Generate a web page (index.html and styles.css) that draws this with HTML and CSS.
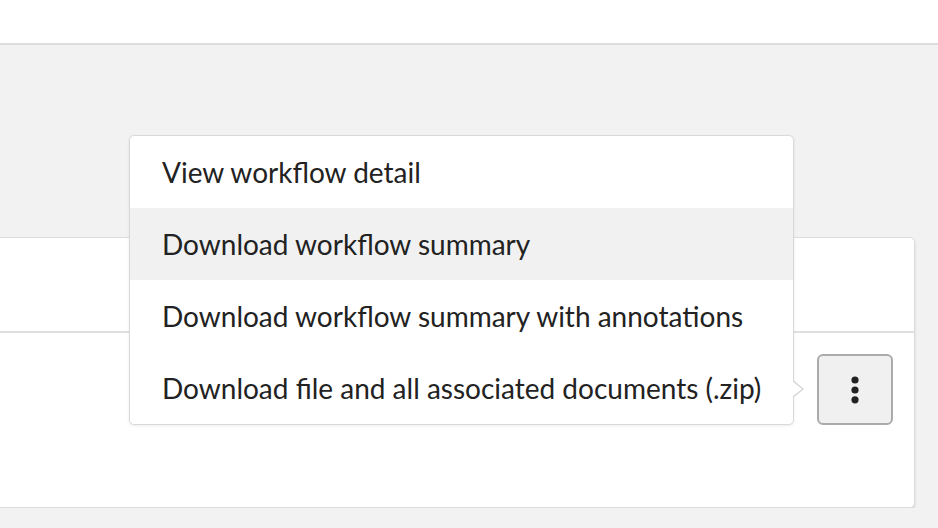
FILE: index.html
```html
<!DOCTYPE html>
<html lang="en">
<head>
    <meta charset="UTF-8">
    <meta name="viewport" content="width=device-width, initial-scale=1.0">
    <title>Workflow</title>
    <link rel="stylesheet" href="styles.css">
</head>
<body>
    <div class="topbar"></div>
    <div class="main">
        <div class="card">
            <div class="card-head"></div>
            <div class="card-body">
                <div class="actions">
                    <ul class="menu">
                        <li>View workflow detail</li>
                        <li class="active">Download workflow summary</li>
                        <li>Download workflow summary with annotations</li>
                        <li>Download file and all associated documents (.zip)</li>
                    </ul>
                    <button class="kebab" aria-label="More actions">
                        <svg width="10" height="30" viewBox="0 0 10 30">
                            <circle cx="5" cy="5" r="3.6" fill="#222"/>
                            <circle cx="5" cy="15" r="3.6" fill="#222"/>
                            <circle cx="5" cy="24.8" r="3.6" fill="#222"/>
                        </svg>
                    </button>
                </div>
            </div>
        </div>
    </div>
</body>
</html>
```

FILE: styles.css
```css
body {
    margin: 0;
    background-color: #f2f2f2;
    font-family: Lato, "Open Sans", sans-serif;
    color: #222;
    overflow: hidden;
}

.topbar {
    height: 43px;
    background-color: #fff;
    border-bottom: 2px solid #dcdcdc;
}

.main {
    padding-top: 192px;
}

.card {
    margin-left: -10px;
    margin-right: 23px;
    background-color: #fff;
    border: 1px solid #dcdcdc;
    border-radius: 5px;
    box-shadow: 0 2px 3px rgba(0, 0, 0, 0.12);
}

.card-head {
    height: 93px;
    border-bottom: 2px solid #e0e0e0;
}

.card-body {
    display: flex;
    justify-content: flex-end;
    padding: 21px 21px 82px;
}

.actions {
    position: relative;
}

.kebab {
    display: flex;
    align-items: center;
    justify-content: center;
    width: 76px;
    height: 71px;
    background-color: #f0f0f0;
    border: 2px solid #ababab;
    border-radius: 6px;
    padding: 0;
    cursor: pointer;
}

.menu {
    position: absolute;
    right: calc(100% + 23px);
    bottom: 0;
    width: 663px;
    margin: 0;
    padding: 0;
    list-style: none;
    background-color: #fff;
    border: 1px solid #d9d9d9;
    border-radius: 5px;
    box-shadow: 0 1px 3px rgba(0, 0, 0, 0.08);
}

.menu li {
    height: 72px;
    line-height: 72px;
    padding-left: 32px;
    font-size: 28px;
    white-space: nowrap;
    cursor: pointer;
}

.menu li.active {
    background-color: #f1f1f1;
}

/* arrow pointing at the button */
.menu::before,
.menu::after {
    content: "";
    position: absolute;
    top: 244px;
    border-style: solid;
    border-color: transparent;
}

.menu::before {
    right: -11px;
    border-width: 9px 0 9px 11px;
    border-left-color: #d4d4d4;
}

.menu::after {
    right: -9px;
    top: 245px;
    border-width: 8px 0 8px 10px;
    border-left-color: #fff;
}
```
